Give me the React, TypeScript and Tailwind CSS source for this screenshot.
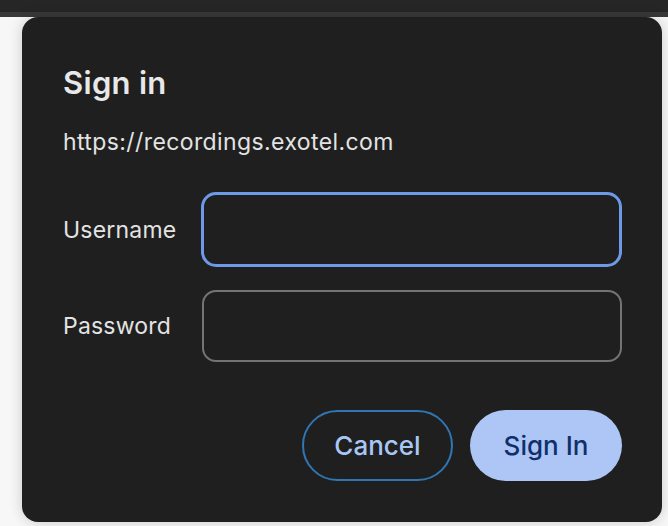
import React from "react";

export default function App() {
  return (
    <div
      className="w-[668px] h-[526px] overflow-hidden bg-[#f7f7f7]"
      style={{ fontFamily: "Inter, 'Noto Sans', sans-serif" }}
    >
      <div className="h-[12px] bg-[#262626]" />
      <div className="h-[5px] bg-[#393939]" />
      <div className="ml-[22px] w-[640px] h-[505px] rounded-[16px] bg-[#1f1f1f] shadow-[0_0_14px_rgba(0,0,0,0.18)] pt-[48px] pl-[41px] pr-[40px]">
        <div className="text-[31px] leading-[36px] font-semibold tracking-[0.3px] text-[#e8e8e8]">
          Sign in
        </div>
        <div className="mt-[27px] text-[23px] leading-[28px] tracking-[0.4px] text-[#e3e3e3]">
          https://recordings.exotel.com
        </div>
        <div className="mt-[36px] flex items-center">
          <div className="w-[138px] text-[23px] leading-[28px] tracking-[0.2px] text-[#e3e3e3]">Username</div>
          <div className="w-[422px] h-[75px] rounded-[15px] border-[3px] border-[#6d9ae8] bg-[#1f1f1f]" />
        </div>
        <div className="mt-[23px] flex items-center">
          <div className="w-[138px] text-[23px] leading-[28px] tracking-[0.2px] text-[#e3e3e3]">Password</div>
          <div className="ml-[1px] w-[420px] h-[72px] rounded-[14px] border-2 border-[#747474] bg-[#1f1f1f]" />
        </div>
        <div className="mt-[48px] flex justify-end gap-[17px]">
          <button className="w-[151px] h-[71px] rounded-full border-2 border-[#2f76b2] text-[26px] font-medium text-[#a9c7f5]">
            Cancel
          </button>
          <button className="w-[152px] h-[71px] rounded-full bg-[#adc6f5] text-[26px] font-medium text-[#10306b]">
            Sign In
          </button>
        </div>
      </div>
    </div>
  );
}
